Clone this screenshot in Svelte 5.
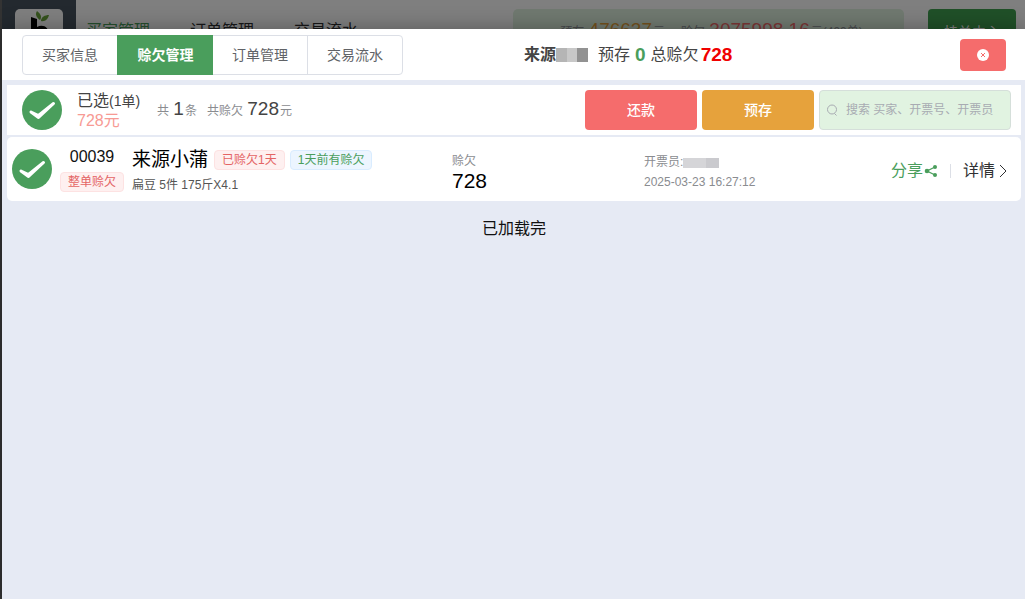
<script>
  const tabs = ['买家信息', '赊欠管理', '订单管理', '交易流水'];
  let active = $state(1);
  let keyword = $state('');
  let allSelected = $state(true);
  let orderSelected = $state(true);
</script>

{#snippet check()}
  <svg viewBox="0 0 40 40" aria-hidden="true">
    <circle cx="20" cy="20" r="20" />
    <path d="M9 22 16.500 27.500 31.500 13.500 16.500 25.500Z" />
  </svg>
{/snippet}

<div class="app">
  <header class="topbar">
    <div class="brand">
      <div class="logo">
        <svg viewBox="0 0 48 48" aria-hidden="true">
          <path d="M25 11C21 8 20 5 22 2c4 3 5 6 3 9Z" fill="#6aa53c" />
          <path d="M26 12c0-4 4-6 8-6-1 4-4 7-8 6Z" fill="#6aa53c" />
          <path d="M16 8l6 2v8c6-3 12 0 12 8s-12 12-18 6Z" fill="#000" />
          <path d="M22 24c3-2 6 0 6 4s-4 6-6 3Z" fill="#fff" />
        </svg>
      </div>
    </div>
    <nav class="menu">
      <a class="current" href="#buyers">买家管理</a>
      <a href="#orders">订单管理</a>
      <a href="#flow">交易流水</a>
    </nav>
    <div class="totals">
      <span>预存 <b class="amber">476637</b>元</span>
      <span>赊欠 <b class="red">3075998.16</b>元(499单)</span>
    </div>
    <button class="center">挂单中心</button>
  </header>
  <div class="mask"></div>

  <section class="drawer">
    <header class="head">
      <div class="tabs">
        {#each tabs as tab, i}
          <button class:active={i === active} onclick={() => (active = i)}>{tab}</button>
        {/each}
      </div>
      <div class="summary">
        <strong>来源</strong><span class="mosaic wide"></span>
        <span class="label">预存</span><b class="green">0</b>
        <span>总赊欠</span><b class="danger">728</b>
        <button class="close" aria-label="关闭">
          <svg viewBox="0 0 12 12" aria-hidden="true">
            <circle cx="6" cy="6" r="6" fill="#fff" />
            <path d="m4 4 4 4M8 4 4 8" stroke="#f56c6c" stroke-width="1" />
          </svg>
        </button>
      </div>
    </header>

    <main>
      <div class="toolbar">
        <label class="tick">
          <input type="checkbox" aria-label="全选" bind:checked={allSelected} />
          {@render check()}
        </label>
        <div class="chosen">
          <div>已选<small>(1单)</small></div>
          <div class="pink">728元</div>
        </div>
        <div class="count">共 <b>1</b>条</div>
        <div class="count">共赊欠 <b>728</b>元</div>
        <div class="actions">
          <button class="repay">还款</button>
          <button class="deposit">预存</button>
          <label class="search">
            <svg viewBox="0 0 12 12" aria-hidden="true">
              <circle cx="6" cy="5.5" r="4.5" /><path d="m8.500 9.500 2 2" />
            </svg>
            <input type="text" aria-label="搜索" placeholder="搜索 买家、开票号、开票员" bind:value={keyword} />
          </label>
        </div>
      </div>

      <article class="order">
        <label class="tick">
          <input type="checkbox" aria-label="选择 00039" bind:checked={orderSelected} />
          {@render check()}
        </label>
        <div class="number">
          <div>00039</div>
          <span class="tag">整单赊欠</span>
        </div>
        <div class="buyer">
          <div class="name">
            <span>来源小蒲</span>
            <span class="tag">已赊欠1天</span>
            <span class="tag info">1天前有赊欠</span>
          </div>
          <div class="goods">扁豆 5件 175斤X4.1</div>
        </div>
        <div class="debt">
          <div class="muted">赊欠</div>
          <div class="value">728</div>
        </div>
        <div class="issuer muted">
          <div>开票员:<span class="mosaic"></span></div>
          <div>2025-03-23 16:27:12</div>
        </div>
        <div class="links">
          <a class="share" href="#share">分享<svg viewBox="0 0 14 14" aria-hidden="true">
              <path d="M11 3 3 7l8 4" />
              <circle cx="11" cy="3" r="2" /><circle cx="3" cy="7" r="2.300" /><circle cx="11" cy="11" r="2" />
            </svg></a>
          <a class="detail" href="#detail">详情<svg viewBox="0 0 8 14" aria-hidden="true">
              <path d="m1 1 6 6-6 6" />
            </svg></a>
        </div>
      </article>
      <p class="end">已加载完</p>
    </main>
  </section>
</div>

<style>
  :global(body) { margin: 0; }
  .app, button, input { font-family: "Liberation Sans", "Noto Sans CJK SC", sans-serif; }
  .app { position: relative; min-height: 100vh; overflow: hidden; background: #666; }
  .app * { box-sizing: border-box; }
  button { border: 0; border-radius: 4px; padding: 0; cursor: pointer; }
  a { color: inherit; text-decoration: none; }
  svg { display: block; flex: none; }

  .topbar { display: flex; align-items: flex-start; height: 66px; margin-left: 2px; padding-right: 9px; background: #fff; }
  .brand { flex: none; width: 74px; height: 66px; padding: 9px 13px; background: #46525f; }
  .logo { width: 48px; height: 48px; border-radius: 5px; background: #fff; }
  .menu { display: flex; gap: 40px; padding: 9px 0 0 10px; font-size: 16px; line-height: 44px; color: #303133; white-space: nowrap; }
  .menu .current { color: #4a9e5c; }
  .totals { display: flex; justify-content: center; gap: 16px; width: 391px; height: 48px; margin: 9px 24px 0 auto; padding-left: 6px; border-radius: 5px; background: #e1f3e1; color: #909399; font-size: 12px; line-height: 42px; white-space: nowrap; }
  .totals b { margin: 0 1px; font-size: 19px; font-weight: 400; }
  .amber { color: #e6a23c; }
  .red { color: #f56c6c; }
  .center { width: 88px; height: 48px; padding-bottom: 4px; margin-top: 9px; background: #40a050; color: #fff; font-size: 14px; }
  .mask { position: absolute; inset: 0; background: rgb(0 0 0 / 50%); }

  .drawer { position: absolute; inset: 29px 0 0 2px; background: #e6eaf4; box-shadow: 0 0 20px rgb(0 0 0 / 30%); }
  .head { display: grid; grid-template-columns: 1fr 1fr; align-items: center; height: 51px; padding: 0 19px 0 20px; background: #fff; }
  .tabs { display: flex; justify-self: start; border: 1px solid #dcdfe6; border-radius: 4px; }
  .tabs button { width: 95px; height: 38px; padding-bottom: 2px; background: none; color: #606266; font-size: 14px; border-radius: 0; }
  .tabs button:first-child { width: 94px; }
  .tabs button + button { border-left: 1px solid #dcdfe6; }
  .tabs button.active { width: 96px; height: 40px; margin: -1px 0; border-color: #4a9e5c; background: #4a9e5c; color: #fff; font-weight: 700; }
  .tabs button.active + button { width: 94px; border-left: 0; }
  .summary { display: flex; align-items: center; padding-left: 10px; font-size: 16px; line-height: 24px; color: #444; white-space: nowrap; }
  .summary b { font-size: 19px; }
  .label { margin-left: 10px; }
  .green { margin: 0 5px; color: #4a9e5c; }
  .danger { margin-left: 2px; color: #f00000; }
  .mosaic { display: inline-block; width: 36px; height: 10px; background: linear-gradient(90deg, #d5d5d8 65%, #cacace 65%); vertical-align: middle; }
  .mosaic.wide { width: 32px; height: 14px; background: linear-gradient(90deg, #b5b5b5 35%, #c8c8c8 35% 65%, #929292 65%); }
  .close { display: grid; place-items: center; margin-left: auto; width: 46px; height: 32px; background: #f56c6c; }
  .close svg { width: 12px; }

  main { padding: 5px 4px 0 5px; }
  .toolbar { display: flex; align-items: center; height: 50px; margin-bottom: 2px; padding: 0 10px 0 15px; background: #fff; white-space: nowrap; }
  .tick { position: relative; flex: none; width: 40px; height: 40px; }
  .tick input { position: absolute; inset: 0; width: 100%; height: 100%; margin: 0; opacity: 0; }
  .tick svg { width: 40px; height: 40px; fill: #c0c4cc; }
  .tick input:checked + svg { fill: #4a9e5c; }
  .tick path { fill: #fff; stroke: #fff; stroke-width: 3; stroke-linecap: round; stroke-linejoin: round; }
  .chosen { width: 85px; padding: 2px 0 0 15px; font-size: 16px; line-height: 20px; color: #444; }
  .chosen small { font-size: 14px; }
  .pink { color: #f79a94; }
  .count { margin-left: 10px; font-size: 12px; line-height: 24px; color: #8a8c90; }
  .count b { margin: 0 1px; font-size: 19px; font-weight: 400; color: #444; }
  .actions { display: flex; gap: 5px; margin-left: auto; }
  .actions button { width: 112px; height: 40px; padding-bottom: 2px; color: #fff; font-size: 14px; font-weight: 500; }
  .repay { background: #f56c6c; }
  .deposit { background: #e6a23c; }
  .search { display: flex; align-items: center; gap: 8px; width: 192px; height: 40px; padding: 0 6px; border: 1px solid #d5dfda; border-radius: 4px; background: #e1f3e1; }
  .search svg { width: 12px; fill: none; stroke: #a8abb2; }
  .search input { min-width: 0; flex: 1; padding: 0; border: 0; outline: 0; background: none; font-size: 12px; }
  .search input::placeholder { color: #a8abb2; }

  .order { display: grid; grid-template-columns: 40px 80px 320px 192px 1fr auto; align-items: center; height: 64px; padding: 0 14px 0 5px; border-radius: 5px; background: #fff; white-space: nowrap; }
  .number { display: flex; flex-direction: column; align-items: center; gap: 6px; padding-top: 2px; font-size: 16px; line-height: 18px; color: #111; }
  .tag { height: 20px; padding: 0 7px; border: 1px solid #fde2e2; border-radius: 4px; background: #fef0f0; color: #e46464; font-size: 12px; line-height: 18px; }
  .tag.info { border-color: #d9ecff; background: #ecf5ff; color: #4a9e5c; }
  .debt, .links { padding-top: 3px; }
  .buyer, .issuer { padding-top: 6px; }
  .name { display: flex; align-items: center; gap: 6px; font-size: 19px; line-height: 26px; color: #000; }
  .name .info { margin-left: -1px; }
  .goods { font-size: 12px; line-height: 24px; color: #555; }
  .muted { font-size: 12px; line-height: 20px; color: #8a8c90; }
  .debt .value { font-size: 21px; line-height: 20px; color: #000; }
  .links { display: flex; align-items: center; font-size: 16px; line-height: 22px; }
  .links a { display: flex; align-items: center; }
  .share { color: #4a9e5c; }
  .share svg { width: 14px; margin-left: 1px; fill: #4a9e5c; }
  .share path { fill: none; stroke: #4a9e5c; stroke-width: 1.3; }
  .detail { color: #303133; }
  .detail::before { content: ""; width: 1px; height: 14px; margin: 0 12px; background: #dcdfe6; }
  .detail svg { width: 8px; margin-left: 4px; fill: none; stroke: #303133; }
  .end { margin: 16px 0 0; text-align: center; font-size: 16px; line-height: 24px; color: #111; }
</style>
